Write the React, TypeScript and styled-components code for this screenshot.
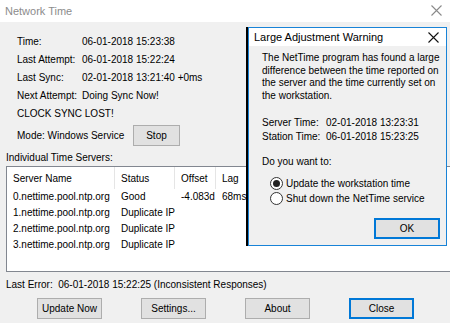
import styled, { createGlobalStyle } from "styled-components";

const GlobalStyle = createGlobalStyle`
  html, body {
    margin: 0;
    padding: 0;
    background: #f0f0f0;
  }
  * {
    box-sizing: border-box;
  }
`;

interface ServerRow {
  name: string;
  status: string;
  offset?: string;
  lag?: string;
}

const servers: ServerRow[] = [
  { name: "0.nettime.pool.ntp.org", status: "Good", offset: "-4.083d", lag: "68ms" },
  { name: "1.nettime.pool.ntp.org", status: "Duplicate IP" },
  { name: "2.nettime.pool.ntp.org", status: "Duplicate IP" },
  { name: "3.nettime.pool.ntp.org", status: "Duplicate IP" },
];

const info = [
  ["Time:", "06-01-2018 15:23:38"],
  ["Last Attempt:", "06-01-2018 15:22:24"],
  ["Last Sync:", "02-01-2018 13:21:40 +0ms"],
  ["Next Attempt:", "Doing Sync Now!"],
];

const CloseIcon = ({ color }: { color: string }) => (
  <svg width="11" height="11" viewBox="0 0 11 11">
    <path d="M0.5 0.5 L10.5 10.5 M10.5 0.5 L0.5 10.5" stroke={color} strokeWidth="1.1" fill="none" />
  </svg>
);

const App = () => {
  return (
    <>
      <GlobalStyle />
      <WindowStyle>
        <TitleBarStyle>
          <TitleTextStyle $inactive>Network Time</TitleTextStyle>
          <CloseIcon color="#8a8a8a" />
        </TitleBarStyle>

        <BodyStyle>
          <InfoGridStyle>
            {info.map(([label, value]) => (
              <InfoRowStyle key={label}>
                <span>{label}</span>
                <span>{value}</span>
              </InfoRowStyle>
            ))}
            <InfoRowStyle>
              <span>CLOCK SYNC LOST!</span>
            </InfoRowStyle>
          </InfoGridStyle>

          <ModeRowStyle>
            <ModeLabelStyle>Mode: Windows Service</ModeLabelStyle>
            <ButtonStyle $width={47}>Stop</ButtonStyle>
          </ModeRowStyle>

          <SectionLabelStyle>Individual Time Servers:</SectionLabelStyle>

          <ListBoxStyle>
            <ListHeaderStyle>
              <HeaderCellStyle>Server Name</HeaderCellStyle>
              <HeaderCellStyle>Status</HeaderCellStyle>
              <HeaderCellStyle>Offset</HeaderCellStyle>
              <HeaderCellStyle>Lag</HeaderCellStyle>
            </ListHeaderStyle>
            {servers.map((s) => (
              <ListRowStyle key={s.name}>
                <CellStyle>{s.name}</CellStyle>
                <CellStyle>{s.status}</CellStyle>
                <CellStyle>{s.offset}</CellStyle>
                <CellStyle>{s.lag}</CellStyle>
              </ListRowStyle>
            ))}
          </ListBoxStyle>

          <LastErrorStyle>Last Error:&nbsp; 06-01-2018 15:22:25 (Inconsistent Responses)</LastErrorStyle>

          <ButtonRowStyle>
            <ButtonStyle $width={65}>Update Now</ButtonStyle>
            <ButtonStyle $width={65}>Settings...</ButtonStyle>
            <ButtonStyle $width={65}>About</ButtonStyle>
            <ButtonStyle $width={65} $default>Close</ButtonStyle>
          </ButtonRowStyle>
        </BodyStyle>

        <DialogStyle>
          <DialogTitleBarStyle>
            <TitleTextStyle>Large Adjustment Warning</TitleTextStyle>
            <CloseIcon color="#111" />
          </DialogTitleBarStyle>
          <DialogBodyStyle>
            <ParagraphStyle>
              The NetTime program has found a large<br />
              difference between the time reported on<br />
              the server and the time currently set on<br />
              the workstation.
            </ParagraphStyle>

            <TimesStyle>
              <span>Server Time:</span>
              <span>02-01-2018 13:23:31</span>
              <span>Station Time:</span>
              <span>06-01-2018 15:23:25</span>
            </TimesStyle>

            <QuestionStyle>Do you want to:</QuestionStyle>

            <RadioGroupStyle>
              <RadioRowStyle>
                <RadioCircleStyle $checked />
                Update the workstation time
              </RadioRowStyle>
              <RadioRowStyle>
                <RadioCircleStyle />
                Shut down the NetTime service
              </RadioRowStyle>
            </RadioGroupStyle>

            <DialogButtonRowStyle>
              <ButtonStyle $width={66} $default>OK</ButtonStyle>
            </DialogButtonRowStyle>
          </DialogBodyStyle>
        </DialogStyle>
      </WindowStyle>
    </>
  );
};

const WindowStyle = styled.div`
  position: relative;
  width: 450px;
  height: 323px;
  overflow: hidden;
  background: #f0f0f0;
  font-family: "Liberation Sans", Arial, sans-serif;
  font-size: 10px;
  color: #000;
`;

const TitleBarStyle = styled.div`
  height: 22px;
  background: #fff;
  display: flex;
  align-items: center;
  justify-content: space-between;
  padding: 0 8px 1px 5px;
`;

const TitleTextStyle = styled.span<{ $inactive?: boolean }>`
  font-size: 11px;
  color: ${({ $inactive }) => ($inactive ? "#8c8c8c" : "#000")};
`;

const BodyStyle = styled.div`
  padding-top: 11px;
`;

const InfoGridStyle = styled.div`
  margin-left: 17px;
  display: flex;
  flex-direction: column;
`;

const InfoRowStyle = styled.div`
  display: grid;
  grid-template-columns: 65px auto;
  height: 18px;
  line-height: 18px;
  white-space: nowrap;
`;

const ModeRowStyle = styled.div`
  display: flex;
  align-items: center;
  margin: 2px 0 0 17px;
  height: 21px;
`;

const ModeLabelStyle = styled.span`
  width: 116px;
`;

const ButtonStyle = styled.button<{ $width: number; $default?: boolean }>`
  width: ${({ $width }) => $width}px;
  height: 21px;
  padding: 0;
  font-family: "Liberation Sans", Arial, sans-serif;
  font-size: 10px;
  color: #000;
  background: #e1e1e1;
  border: 1px solid ${({ $default }) => ($default ? "#0078d7" : "#adadad")};
  box-shadow: ${({ $default }) => ($default ? "inset 0 0 0 1px #0078d7" : "none")};
  border-radius: 0;
`;

const SectionLabelStyle = styled.div`
  margin: 5px 0 0 6px;
  height: 14px;
  line-height: 14px;
`;

const ListBoxStyle = styled.div`
  margin: 1px 0 0 6px;
  width: 460px;
  height: 106px;
  background: #fff;
  border: 1px solid #828790;
`;

const columns = "108px 60px 41px 60px";

const ListHeaderStyle = styled.div`
  display: grid;
  grid-template-columns: ${columns};
  height: 22px;
  align-items: stretch;
`;

const HeaderCellStyle = styled.div`
  display: flex;
  align-items: center;
  padding-left: 6px;
  border-right: 1px solid #e5e5e5;
  white-space: nowrap;
`;

const ListRowStyle = styled.div`
  display: grid;
  grid-template-columns: ${columns};
  height: 16px;
  line-height: 16px;
`;

const CellStyle = styled.div`
  padding-left: 6px;
  white-space: nowrap;
`;

const LastErrorStyle = styled.div`
  margin: 6px 0 0 6px;
  height: 14px;
  line-height: 14px;
  white-space: nowrap;
`;

const ButtonRowStyle = styled.div`
  display: flex;
  gap: 39px;
  margin-top: 6px;
  padding-left: 37px;
`;

const DialogStyle = styled.div`
  position: absolute;
  left: 248px;
  top: 27px;
  width: 199px;
  height: 219px;
  border: 1px solid #1883d7;
  box-shadow: -2px 0 0 0 #000;
  background: #f0f0f0;
  display: flex;
  flex-direction: column;
`;

const DialogTitleBarStyle = styled.div`
  height: 18px;
  background: #fff;
  display: flex;
  align-items: center;
  justify-content: space-between;
  padding: 0 7px 0 5px;
`;

const DialogBodyStyle = styled.div`
  padding: 6px 6px 0 13px;
  white-space: nowrap;
`;

const ParagraphStyle = styled.div`
  line-height: 12.6px;
`;

const TimesStyle = styled.div`
  margin-top: 14px;
  display: grid;
  grid-template-columns: 64px auto;
  grid-auto-rows: 14px;
  line-height: 14px;
`;

const QuestionStyle = styled.div`
  margin-top: 11px;
  height: 14px;
  line-height: 14px;
`;

const RadioGroupStyle = styled.div`
  margin: 7px 0 0 8px;
  display: flex;
  flex-direction: column;
`;

const RadioRowStyle = styled.label`
  display: flex;
  align-items: center;
  gap: 3px;
  height: 15px;
`;

const RadioCircleStyle = styled.span<{ $checked?: boolean }>`
  width: 13px;
  height: 13px;
  border-radius: 50%;
  border: 1px solid #333;
  background: #fff;
  display: flex;
  align-items: center;
  justify-content: center;

  &::after {
    content: "";
    width: 7px;
    height: 7px;
    border-radius: 50%;
    background: ${({ $checked }) => ($checked ? "#222" : "transparent")};
  }
`;

const DialogButtonRowStyle = styled.div`
  display: flex;
  justify-content: flex-end;
  margin-top: 12px;
`;

export default App;
